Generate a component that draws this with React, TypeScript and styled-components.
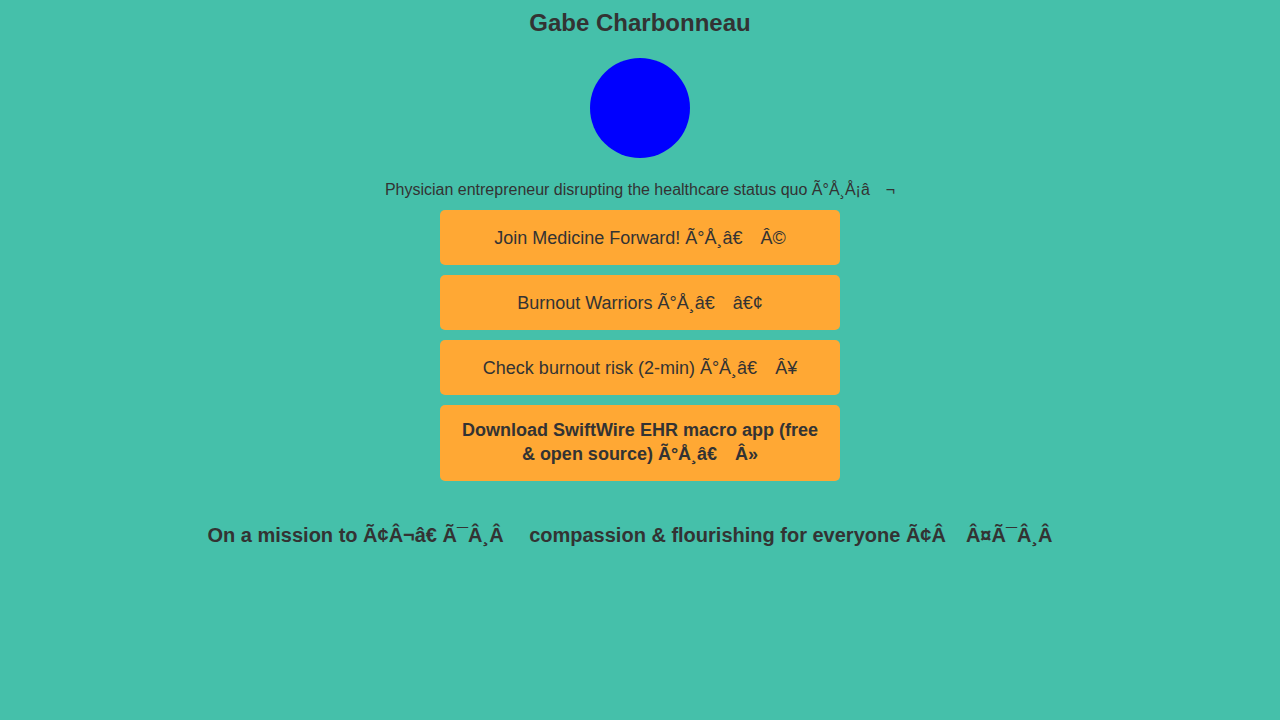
import React from "react";
import styled, { createGlobalStyle } from "styled-components";

const Global = createGlobalStyle`
  html, body {
    margin: 0;
    padding: 0;
    background: #45c0aa;
  }
  body {
    font-family: "Liberation Sans", Arial, Helvetica, sans-serif;
    color: #333333;
  }
`;

const Page = styled.main`
  min-height: 720px;
  display: flex;
  flex-direction: column;
  align-items: center;
  padding-top: 8px;
  box-sizing: border-box;
`;

const Name = styled.h1`
  margin: 0;
  font-size: 24px;
  line-height: 30px;
  font-weight: 700;
  color: #333;
`;

const Avatar = styled.div`
  width: 100px;
  height: 100px;
  border-radius: 50%;
  background: #0000ff;
  margin-top: 20px;
`;

const Bio = styled.p`
  margin: 22px 0 0;
  font-size: 16px;
  line-height: 20px;
  white-space: pre;
`;

const Links = styled.div`
  display: flex;
  flex-direction: column;
  gap: 10px;
  margin-top: 10px;
  width: 400px;
`;

const LinkButton = styled.a<{ $bold?: boolean; $padTop: number; $padBottom: number }>`
  display: block;
  box-sizing: border-box;
  width: 400px;
  padding: ${(p) => p.$padTop}px 20px ${(p) => p.$padBottom}px;
  background: #ffa834;
  border-radius: 5px;
  text-align: center;
  font-size: 18px;
  line-height: 24px;
  font-weight: ${(p) => (p.$bold ? 700 : 400)};
  color: #333;
  text-decoration: none;
  white-space: pre-wrap;
`;

const Mission = styled.h2`
  margin: 42px 0 0;
  font-size: 20px;
  line-height: 24px;
  font-weight: 700;
  white-space: pre;
`;

const G = "\u2003";

const links = [
  { text: `Join Medicine Forward! Ã°Å¸â€${G}Â©`, top: 15.5, bottom: 15.5 },
  { text: `Burnout Warriors Ã°Å¸â€${G}â€¢`, top: 15.5, bottom: 15.5 },
  { text: `Check burnout risk (2-min) Ã°Å¸â€${G}Â¥`, top: 15.5, bottom: 15.5 },
  { text: `Download SwiftWire EHR macro app (free & open source) Ã°Å¸â€${G}Â»`, top: 13, bottom: 15, bold: true },
];

export default function App() {
  return (
    <>
      <Global />
      <Page>
        <Name>Gabe Charbonneau</Name>
        <Avatar />
        <Bio>{`Physician entrepreneur disrupting the healthcare status quo Ã°Å¸Å¡â${G}¬`}</Bio>
        <Links>
          {links.map((l) => (
            <LinkButton key={l.text} href="#" $padTop={l.top} $padBottom={l.bottom} $bold={l.bold}>
              {l.text}
            </LinkButton>
          ))}
        </Links>
        <Mission>{`On a mission to Ã¢Â¬â€ Ã¯Â¸Â${G} compassion & flourishing for everyone Ã¢Â${G}Â¤Ã¯Â¸Â${G}`}</Mission>
      </Page>
    </>
  );
}
